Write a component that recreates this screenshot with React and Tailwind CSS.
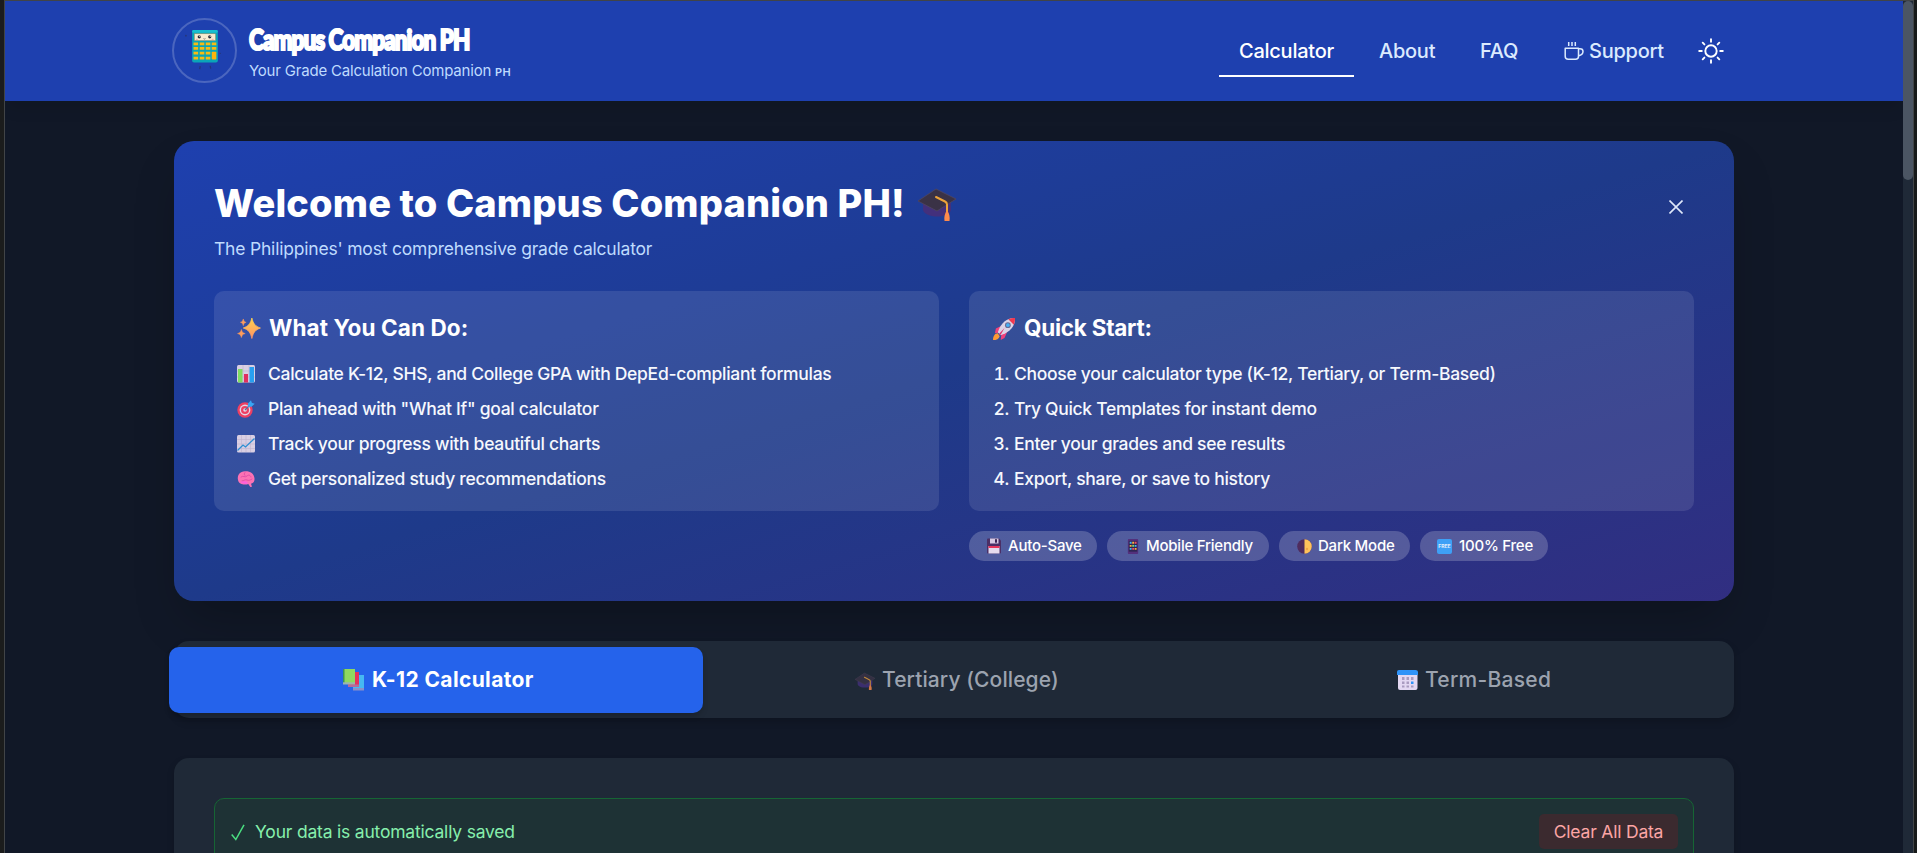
import React from "react";

const GradCap = ({ className }) => (
  <svg viewBox="0 0 38 34" className={className}>
    <path d="M5 15v7c1 4 7 6.500 14 6.500s13-2.500 14-6.500v-7z" fill="#43307c" />
    <path d="M0 13 18 1l20 10-19 12z" fill="#3a3246" />
    <path d="M0 13 18 1l20 10-19 12z" fill="none" stroke="#51465f" strokeWidth=".8" />
    <path d="M18 9l9 4.500q2 1 2 3V24" fill="none" stroke="#eda43a" strokeWidth="2" strokeLinecap="round" />
    <path d="M29 22.500c2.500 3 3 6.500 2.500 10.500h-5c-.5-4 0-7.500 2.500-10.500z" fill="#ff8a4c" />
  </svg>
);

const Sparkles = () => (
  <svg viewBox="0 0 24 22" className="h-[21px] w-[24px]">
    <defs>
      <linearGradient id="sp" x1="0" y1="0" x2="0" y2="1">
        <stop offset="0" stopColor="#ffd44f" />
        <stop offset="1" stopColor="#ff9166" />
      </linearGradient>
    </defs>
    <path d="M15 0c1.500 6 3.500 8.500 9 10.500-5.500 2-7.500 4.500-9 11-1.500-6.500-3.500-9-9-11C11.500 8.500 13.500 6 15 0z" fill="url(#sp)" stroke="url(#sp)" strokeWidth=".8" strokeLinejoin="round" />
    <path d="M6 1c.6 2.200 1.200 3 3 3.500C7.200 5 6.600 5.800 6 8c-.6-2.200-1.200-3-3-3.500C4.800 4 5.400 3.200 6 1zM4 12c.7 2.700 1.500 3.600 4 4.300-2.500.7-3.300 1.500-4 4.200-.7-2.700-1.500-3.500-4-4.200C2.500 15.600 3.300 14.700 4 12z" fill="#ff9d5c" stroke="#ff9d5c" strokeWidth=".5" />
  </svg>
);

const Rocket = () => (
  <svg viewBox="0 0 24 24" className="h-[23px] w-[23px]">
    <path d="M9 9 3 12l-1 5 6-1zM15 15l-3 7-4 2 1-8z" fill="#f0417c" />
    <path d="M5 17c-3 0-5 3-5 7 4 0 6-1 7-4z" fill="#ff9a33" />
    <path d="M23 1c-7 0-12 3-16 10l-2 5 3 3 5-2C20 13 23 8 23 1z" fill="#dcd3e6" />
    <path d="M23 1c-2.500 0-5 .4-7 1.300L21.700 8C22.600 6 23 3.500 23 1z" fill="#f2384f" />
    <circle cx="15.500" cy="8.500" r="3" fill="#6b6c94" />
    <circle cx="15.500" cy="8.500" r="1.900" fill="#45b0f5" />
    <path d="M6 18 12 11.500 8 18.500z" fill="#e22c66" />
  </svg>
);

const BarChart = () => (
  <svg viewBox="0 0 18 18" className="size-[18px]">
    <rect width="18" height="17.500" rx="1.500" fill="#d9cfe3" />
    <path d="M0 6h18M0 12h18M6 0v17M12 0v17" stroke="#bfb3cf" strokeWidth=".6" />
    <rect x="1" y="4" width="4.500" height="13.500" fill="#7fdc62" />
    <rect x="7" y="9" width="4" height="8.500" fill="#e0305f" />
    <rect x="12.500" y="2" width="4.500" height="15.500" fill="#289ff0" />
  </svg>
);

const Target = () => (
  <svg viewBox="0 0 18 18" className="size-[18px]">
    <circle cx="8" cy="10" r="7.700" fill="#ee3f62" />
    <circle cx="8" cy="10" r="5.400" fill="#e3d7e8" />
    <circle cx="8" cy="10" r="4" fill="#ee3f62" />
    <circle cx="8" cy="10" r="1.800" fill="#e3d7e8" />
    <path d="M8 10l5-5" stroke="#5b6d9c" strokeWidth="1.300" />
    <path d="M11 6.800V3.500L14 .3l.8 2.500 2.900.9-3.200 3.100z" fill="#37a5f4" />
  </svg>
);

const LineChart = () => (
  <svg viewBox="0 0 18 18" className="size-[18px]">
    <rect width="18" height="17.500" rx="1.500" fill="#d9cfe3" />
    <path d="M0 4.500h18M0 9h18M0 13.500h18M4.500 0v17M9 0v17M13.500 0v17" stroke="#bfb3cf" strokeWidth=".6" />
    <path d="M.5 15.500 6 10l2.500 2L17.500 3.500" fill="none" stroke="#2f8fd3" strokeWidth="1.300" />
  </svg>
);

const Brain = () => (
  <svg viewBox="0 0 18 18" className="size-[18px]">
    <path d="M1 10C0 5 3 1.500 8 1.300c5-.3 9 2.200 9.500 7 .3 3-1 5-3.500 5.500l1 3-1.700.2-2-3C8 15 2 15 1 10z" fill="#fc72b4" />
    <path d="M4 7c2-2 4 1 6-1s4 0 4 1M5 11c2 0 3-2 5-1s3 0 5-1M8 2.500c-1 1-1 2 0 3" fill="none" stroke="#df4ba6" strokeWidth=".9" strokeLinecap="round" />
    <path d="M3 11c1.500 3 5 3 8 2.400 0 0-1-2.400-3-2.200S4 12 3 11z" fill="#ff5fdc" />
  </svg>
);

const Floppy = () => (
  <svg viewBox="0 0 14 16" className="h-[16px] w-[14px]">
    <path d="M0 1.500Q0 .5 1 .5h11l2 2v12q0 1-1 1H1q-1 0-1-1z" fill="#4b2f66" />
    <rect x="3" y=".5" width="8.500" height="5" fill="#d8cbe4" />
    <rect x="8" y="1.200" width="2" height="3.500" fill="#3d2757" />
    <rect x="1.500" y="8" width="11" height="7.500" fill="#e6dcee" />
    <rect x="1.500" y="8" width="11" height="2" fill="#e8365c" />
  </svg>
);

const Phone = () => (
  <svg viewBox="0 0 12 16" className="h-[15px] w-[12px]">
    <rect x=".5" width="11" height="16" rx="1" fill="#53307c" />
    <rect x="1.500" y="2" width="9" height="11.500" fill="#2e2553" />
    <path d="M2.500 4h2M2.500 10.500h2M7.800 7.300h2" stroke="#45b4f5" strokeWidth="2" />
    <path d="M5.200 4h2M2.500 7.300h2M7.800 10.500h2" stroke="#ffb13d" strokeWidth="2" />
    <path d="M7.800 4h2M5.200 10.500h2" stroke="#f0506c" strokeWidth="2" />
    <path d="M5.200 7.300h2" stroke="#7ddc6a" strokeWidth="2" />
  </svg>
);

const HalfMoon = () => (
  <svg viewBox="0 0 15 15" className="size-[15px]">
    <circle cx="7.500" cy="7.500" r="7.300" fill="#4f2c5e" />
    <path d="M7.500.2a7.300 7.300 0 0 1 0 14.600z" fill="#ffc35a" />
    <circle cx="10" cy="10" r="1.200" fill="#f0a546" />
  </svg>
);

const Free = () => (
  <span className="flex h-[15px] w-[15px] items-center justify-center rounded-[2px] bg-[#3ea0f6] text-[5px] font-bold tracking-normal text-[#e4eefb]">
    FREE
  </span>
);

const Books = () => (
  <svg viewBox="0 0 21 22" className="h-[22px] w-[21px]">
    <rect x="10" y="6" width="11" height="15" fill="#46b9f2" />
    <rect x="10" y="19" width="11" height="2.500" fill="#8b8fc9" />
    <rect x="5" y="3" width="11" height="14" fill="#e4315c" />
    <rect x="5" y="15.500" width="11" height="2.500" fill="#b56a9c" />
    <rect x="0" y="0" width="12" height="14" fill="#8fd95f" />
    <rect x="0" y="0" width="1.500" height="15" fill="#3d9455" />
    <rect x="0" y="13.300" width="12" height="2.200" fill="#9ab5b0" />
  </svg>
);

const Calendar = () => (
  <svg viewBox="0 0 21 20" className="h-[20px] w-[21px]">
    <rect x="1" y="1" width="19.500" height="19" rx="2" fill="#e3d8f2" />
    <path d="M0 5V2q0-2 2-2h16.500q2.500 0 2.500 2v3z" fill="#2f93f8" />
    <path d="M5 7h2.500v3H5zM9.500 7H12v3H9.500zM14 7h2.500v3H14zM5 11.500h2.500v2.500H5zM9.500 11.500H12v2.500H9.500zM5 15.500h2.500v2H5zM9.500 15.500H12v2H9.500zM14 15.500h2.500v2H14z" fill="#a99bc0" />
    <rect x="14" y="11.500" width="2.500" height="2.500" fill="#2f93f8" />
  </svg>
);

const Mascot = () => (
  <svg viewBox="0 0 64 64" className="size-full">
    <rect x="19" y="10.500" width="27" height="34" rx="2" fill="#0aa5b8" />
    <rect x="19" y="10.500" width="27" height="3" rx="1.500" fill="#18bfd0" />
    <rect x="21.500" y="14.500" width="22" height="7" fill="#f7ecd2" stroke="#b08d57" strokeWidth=".5" />
    <circle cx="26.500" cy="17.700" r="1.700" fill="#2a2c38" />
    <circle cx="37.500" cy="17.700" r="1.700" fill="#2a2c38" />
    <circle cx="27" cy="17" r=".6" fill="#fff" />
    <circle cx="38" cy="17" r=".6" fill="#fff" />
    <path d="M31 19.500q1 1 2 0" stroke="#2a2c38" strokeWidth=".6" fill="none" />
    <path d="M23 20.300h2M39.500 20.300h2" stroke="#f2a0a0" strokeWidth="1" />
    <path d="M20.500 25h4.800M27 25h4.800M33.300 25h4.800M39.600 25h4.800M20.500 29.800h4.800M27 29.800h4.800M33.300 29.800h4.800M39.600 29.800h4.800M20.500 34.800h4.800M27 34.800h4.800M33.300 34.800h4.800M20.500 40h4.800M27 40h4.800M33.300 40h4.800" stroke="#f8bb12" strokeWidth="3" />
    <rect x="39.600" y="33.300" width="4.800" height="8.200" rx=".8" fill="#ffb40a" />
    <path d="M27.500 48.500l-.5 3M38 48l.5 3" stroke="#263577" strokeWidth="1.300" />
    <circle cx="12.500" cy="16.500" r=".9" fill="#263577" />
    <circle cx="48.500" cy="35" r=".7" fill="#263577" />
  </svg>
);

const Cup = () => (
  <svg viewBox="0 0 20 20" className="mt-[-1px] h-[20px] w-[20px]" fill="none" stroke="currentColor" strokeWidth="1.500">
    <path d="M1.200 7.200h13.300v8q0 3-3 3H4.200q-3 0-3-3z" strokeLinejoin="round" />
    <path d="M14.500 7.800h1.500q3 0 3 2.700 0 3.300-4.500 4.300M4.700 1v4M8 1v4M11.300 1v4" />
  </svg>
);

const Sun = () => (
  <svg viewBox="0 0 26 26" className="size-[26px]" fill="none" stroke="#fff" strokeWidth="1.900" strokeLinecap="round">
    <circle cx="13" cy="13" r="5.700" />
    <path d="M13 1.200v2.600M13 22.200v2.600M1.200 13h2.600M22.200 13h2.600M4.700 4.700l1.700 1.700M19.600 19.600l1.700 1.700M4.700 21.300l1.700-1.700M19.600 6.400l1.700-1.700" />
  </svg>
);

const features = [
  [BarChart, "Calculate K-12, SHS, and College GPA with DepEd-compliant formulas"],
  [Target, 'Plan ahead with "What If" goal calculator'],
  [LineChart, "Track your progress with beautiful charts"],
  [Brain, "Get personalized study recommendations"],
];
const steps = [
  "Choose your calculator type (K-12, Tertiary, or Term-Based)",
  "Try Quick Templates for instant demo",
  "Enter your grades and see results",
  "Export, share, or save to history",
];
const badges = [
  [Floppy, "Auto-Save", "w-[128px] gap-[7px] pl-[18px]"],
  [Phone, "Mobile Friendly", "w-[162px] gap-[7px] pl-[20px]"],
  [HalfMoon, "Dark Mode", "w-[131px] gap-[6px] pl-[18px]"],
  [Free, "100% Free", "w-[128px] gap-[7px] pl-[17px]"],
];

function Header() {
  return (
    <header className="relative z-10 flex h-[100px] shrink-0 bg-[#1e40af] pl-[167px] pr-[179px] shadow-[0_10px_15px_-3px_rgba(0,0,0,0.1)]">
      <div className="mt-[17px] size-[65px] rounded-full border-2 border-white/20">
        <Mascot />
      </div>
      <div className="ml-[12px] pt-[20px]">
        <div className="h-[38px] w-[225px] origin-left scale-x-[0.775] whitespace-nowrap font-['Lato',sans-serif] text-[29px] font-black leading-[36px] tracking-[-1.200px] [-webkit-text-stroke:2.200px_#fff]">
          Campus Companion PH
        </div>
        <div className="flex h-[24px] items-baseline gap-[4px] whitespace-nowrap text-[15px] leading-[24px] text-[#bfdbfe]">
          <span>Your Grade Calculation Companion</span>
          <span className="text-[11px] font-semibold tracking-[0.2px]">PH</span>
        </div>
      </div>
      <nav className="ml-auto flex items-center text-[20px] font-[550] leading-[52px] tracking-[-0.25px] text-[#dbeafe]">
        <a className="flex h-[52px] w-[135px] justify-center border-b-2 border-white text-white">
          <span>Calculator</span>
        </a>
        <a className="ml-[25px] w-[57px]">About</a>
        <a className="ml-[44px] w-[38px]">FAQ</a>
        <a className="ml-[46px] flex w-[101px] items-center gap-[5px]">
          <Cup />
          Support
        </a>
        <button className="ml-[33px]">
          <Sun />
        </button>
      </nav>
    </header>
  );
}

function Welcome() {
  return (
    <section className="h-[460px] shrink-0 rounded-[20px] bg-[linear-gradient(to_bottom_right,#1e40af,#1e3a8a_50%,#312e81)] p-[40px] shadow-[0_25px_50px_-12px_rgba(0,0,0,0.25)]">
      <div className="flex justify-between">
        <div>
          <h1 className="flex h-[43px] items-center whitespace-nowrap text-[38px] font-extrabold leading-[43px]">
            <span className="mt-[1px] w-[704px] tracking-[0.14px]">Welcome to Campus Companion PH!</span>
            <GradCap className="mt-[4px] h-[34px] w-[38px]" />
          </h1>
          <p className="mt-[10px] h-[29px] leading-[29px] text-[#bfdbfe]">
            The Philippines' most comprehensive grade calculator
          </p>
        </div>
        <button className="mr-[11px] mt-[19px] h-[14px]">
          <svg viewBox="0 0 14 14" className="size-[14px]" stroke="#dfe8fa" strokeWidth="1.600">
            <path d="M.5.5l13 13M13.500.5l-13 13" />
          </svg>
        </button>
      </div>
      <div className="mt-[28px] grid grid-cols-2 gap-[30px]">
        <div className="h-[220px] rounded-[10px] bg-white/10 px-[23px] pt-[20px]">
          <h2 className="flex h-[34px] items-center gap-[8px] text-[22.500px] font-bold leading-[34px] tracking-[0.1px]">
            <Sparkles />
            What You Can Do:
          </h2>
          <ul className="mt-[11px] font-[450] tracking-[-0.29px] text-[#f6f8fd]">
            {features.map(([Icon, text]) => (
              <li key={text} className="flex h-[35px] items-center gap-[13px] leading-[35px]">
                <Icon />
                {text}
              </li>
            ))}
          </ul>
        </div>
        <div>
          <div className="h-[220px] rounded-[10px] bg-white/10 px-[24px] pt-[20px]">
            <h2 className="flex h-[34px] items-center gap-[8px] text-[22.500px] font-bold leading-[34px] tracking-[-0.25px]">
              <Rocket />
              Quick Start:
            </h2>
            <ol className="mt-[11px] font-[450] tracking-[-0.29px] text-[#f6f8fd]">
              {steps.map((s, i) => (
                <li key={s} className="flex h-[35px] leading-[35px]">
                  <span className="w-[16px] text-right tabular-nums">{i + 1}.</span>
                  <span className="ml-[5px]">{s}</span>
                </li>
              ))}
            </ol>
          </div>
          <div className="mt-[20px] flex gap-[10px]">
            {badges.map(([Icon, text, cls]) => (
              <span
                key={text}
                className={"flex h-[30px] items-center whitespace-nowrap rounded-full bg-white/20 text-[15px] font-[550] leading-[30px] tracking-[-0.23px] " + cls}
              >
                <Icon />
                {text}
              </span>
            ))}
          </div>
        </div>
      </div>
    </section>
  );
}

function Tabs() {
  return (
    <div className="mt-[40px] flex h-[77px] shrink-0 items-center rounded-[15px] bg-[#1f2937] text-[21px] font-[550] text-[#9ca3af] shadow-[0_4px_8px_-1px_rgba(0,0,0,0.2)]">
      <button className="ml-[-5px] mt-[1px] flex h-[66px] w-[534px] items-center rounded-[10px] bg-[#2563eb] pl-[174px] font-bold text-white shadow-[0_4px_6px_-1px_rgba(0,0,0,0.2)]">
        <Books />
        <span className="ml-[8px] tracking-[0.37px]">K-12 Calculator</span>
      </button>
      <button className="mt-[1px] flex w-[505px] items-center pl-[152px]">
        <GradCap className="mt-[2px] h-[19px] w-[20px] opacity-80" />
        <span className="ml-[7px] tracking-[0.1px]">Tertiary (College)</span>
      </button>
      <button className="mt-[1px] flex flex-1 items-center pl-[189px]">
        <Calendar />
        <span className="ml-[7px] tracking-[0.27px]">Term-Based</span>
      </button>
    </div>
  );
}

function Panel() {
  return (
    <section className="mt-[40px] h-[200px] shrink-0 rounded-[15px] bg-[#1f2937] p-[40px] shadow-[0_4px_8px_-1px_rgba(0,0,0,0.2)]">
      <div className="flex h-[68px] items-center rounded-[10px] border border-[#166534] bg-[#1e3235] pl-[16px] pr-[15px]">
        <svg viewBox="0 0 14 17" className="h-[17px] w-[14px]" fill="none" stroke="#4ade80" strokeWidth="1.500">
          <path d="M.7 10.500 4.800 15.500 13 .8" />
        </svg>
        <span className="ml-[10px] text-[#86efac]">Your data is automatically saved</span>
        <button className="mb-[1px] ml-auto flex h-[35px] w-[139px] items-center justify-center rounded-[5px] bg-[#3b2a2f] pt-px text-[#fca5a5]">
          Clear All Data
        </button>
      </div>
    </section>
  );
}

export default function App() {
  return (
    <div className="flex h-[853px] w-full overflow-hidden bg-[#1b1c1c] pl-[4px] font-['Inter',sans-serif] text-[17.500px] tracking-[-0.2px] text-white">
      <div className="flex min-w-0 flex-1 flex-col overflow-hidden border-l border-t border-[#414447] bg-[#111827]">
        <Header />
        <main className="ml-[169px] mt-[40px] flex w-[1560px] flex-col">
          <Welcome />
          <Tabs />
          <Panel />
        </main>
      </div>
      <div className="w-[10px] border-t border-[#414447] bg-[#1f2937]">
        <div className="h-[179px] rounded-full bg-[#4b5563]" />
      </div>
      <div className="w-[4px] border-l border-[#414447] bg-[#171a1a]" />
    </div>
  );
}
